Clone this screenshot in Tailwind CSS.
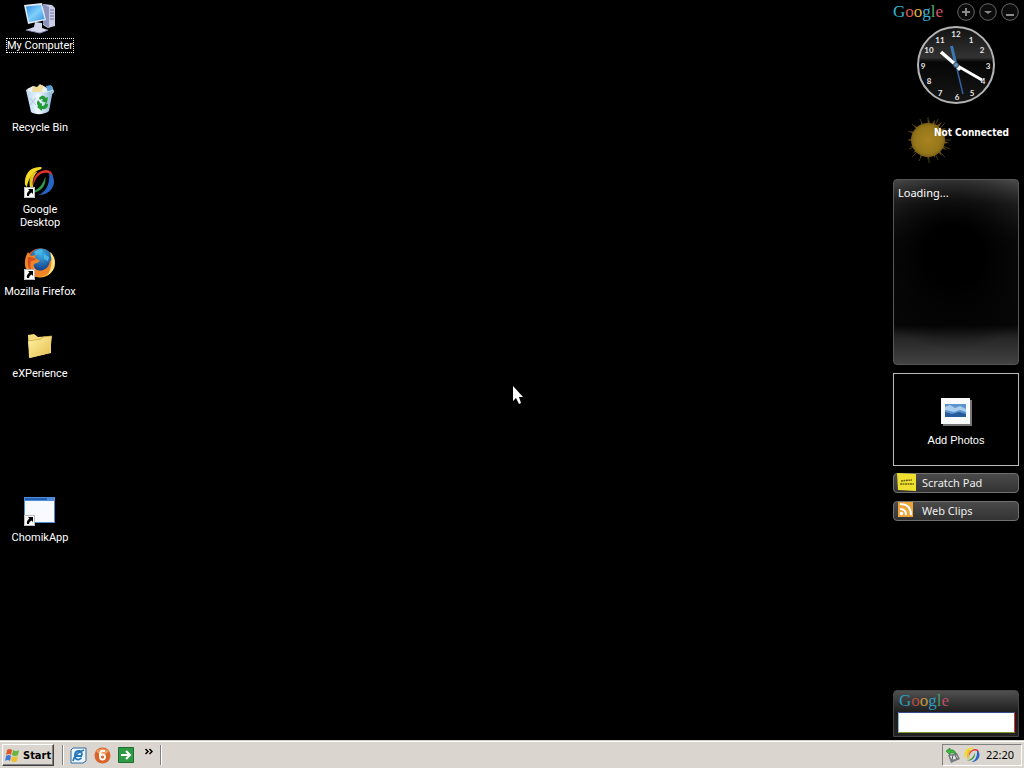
<!DOCTYPE html>
<html lang="en">
<head>
<meta charset="utf-8">
<title>Desktop</title>
<script src="https://cdn.jsdelivr.net/npm/@tailwindcss/browser@4"></script>
</head>
<body class="relative flex h-screen flex-col overflow-hidden bg-black font-['Noto_Sans',sans-serif] text-[11px] leading-[13px] text-white">
<svg class="absolute size-0" aria-hidden="true">
  <defs>
    <linearGradient id="screen" x1="0" y1="0" x2="1" y2="1"><stop offset="0" stop-color="#2f8be8"/><stop offset=".5" stop-color="#7fd0fb"/><stop offset="1" stop-color="#3a8fe0"/></linearGradient>
    <linearGradient id="folder" x1="0" y1="0" x2="1" y2="1"><stop offset="0" stop-color="#fff3a6"/><stop offset="1" stop-color="#e5bd4d"/></linearGradient>
    <linearGradient id="glass" x1="0" y1="0" x2="0" y2="1"><stop offset="0" stop-color="#111"/><stop offset=".4" stop-color="#333"/><stop offset=".46" stop-color="#060606"/><stop offset="1" stop-color="#161616"/></linearGradient>
    <linearGradient id="bin" x1="0" y1="0" x2="1" y2="0"><stop offset="0" stop-color="#b5d5ee"/><stop offset=".45" stop-color="#f3faff"/><stop offset="1" stop-color="#86b3d6"/></linearGradient>
    <radialGradient id="globe" cx=".5" cy=".25" r=".7"><stop offset="0" stop-color="#3fb1e8"/><stop offset="1" stop-color="#143f86"/></radialGradient>
    <linearGradient id="fox" x1="0" y1="0" x2="1" y2="1"><stop offset="0" stop-color="#c93c12"/><stop offset=".6" stop-color="#f08a1e"/><stop offset="1" stop-color="#ffcf33"/></linearGradient>
    <radialGradient id="sun"><stop offset="0" stop-color="#a88420"/><stop offset=".8" stop-color="#94761a"/><stop offset="1" stop-color="#7a6016"/></radialGradient>
    <symbol id="swirl" viewBox="0 0 32 32">
      <path d="M18 1C6 0 0 9 1 19l2 3C4 14 8 6 18 3Z" fill="#f5d922"/>
      <path d="M10 20C11 12 17 6 23 7q4 0 7 5 0-8-8-8C14 5 8 12 10 20Z" fill="#e5322b"/>
      <path d="M26 7q5 2 5 10c-1 8-8 13-16 13 7-3 12-10 11-23Z" fill="#2565c7"/>
      <path d="M22 11c1 8-3 14-10 16H5c8-1 14-6 17-16Z" fill="#2f9e49"/>
      <path d="M9 7C5 12 5 18 7 25l3-2C8 17 9 11 14 6Z" fill="#e0c41e"/>
    </symbol>
    <symbol id="shortcut" viewBox="0 0 11 11">
      <path d="M0 0h11v11H0z" fill="#fff"/><path d="M.5 .5h10v10H.5z" fill="none" stroke="#bbb"/>
      <path d="M4 2h5v5L7.500 5.500Q5 6.500 5 9H3Q2 6 5.500 3.500Z" fill="#000"/>
    </symbol>
  </defs>
</svg>

<main class="flex min-h-0 flex-1 justify-between">
  <nav aria-label="Desktop icons" class="grid w-20 auto-rows-[82px] content-start text-center font-['Roboto',sans-serif]">
    <a href="#computer" class="flex flex-col items-center gap-1 pt-0.5">
      <svg class="size-8" viewBox="0 0 32 32">
        <path d="M19 2l9 1 3 3v18l-7 2-5-3z" fill="#c9cee6"/><path d="M19 2l6 3v21l-6-4z" fill="#8b92bb"/><path d="M26 8h4M26 11h4M26 14h4M26 17h4" stroke="#6e75a5"/>
        <path d="M11 20l7 1v5l6 2-8 3-14-3 8-3z" fill="#d6d9ee"/><path d="M2 28l14 3 8-3" fill="none" stroke="#9298bd"/>
        <path d="M0 3l18-2 4 17-18 4z" fill="#dfe9fa"/><path d="M2 4.500l15-1.500 3.500 14-15.500 3z" fill="url(#screen)"/>
      </svg>
      <span class="border border-dotted border-white">My Computer</span>
    </a>
    <a href="#bin" class="flex flex-col items-center gap-[5px] pt-0.5">
      <svg class="size-8" viewBox="0 0 32 32">
        <path d="M3 5l6-3 5 2 4-3 5 3 5-2 2 6-3 3H5z" fill="#eaf2f8"/><path d="M9 2l4 1 3-3 4 3-3 5H8z" fill="#f2dc9c"/><path d="M22 2l5-1 3 6-6 2z" fill="#5aa0d8"/>
        <path d="M2 6c7 4 18 4 27 0l-4 21c-5 4-14 4-18 1z" fill="url(#bin)"/><path d="M2 6c7 4 18 4 27 0" fill="none" stroke="#d6ebf8"/>
        <path d="M6 14l6 7M6 21l6-7" stroke="#b1c4d8"/>
        <path d="M15 14q4-5 7 0l2-1-1 6-6-2 2-1q-1-2-3 0zM24 20q0 6-6 5v2l-5-4 5-4v3q3 0 3-3zM14 16l4 5-4 1q-2-3 0-6z" fill="#209b35"/>
      </svg>
      <span>Recycle Bin</span>
    </a>
    <a href="#google-desktop" class="flex flex-col items-center gap-[5px] pt-0.5">
      <svg class="size-8" viewBox="0 0 32 32"><use href="#swirl" width="31" height="31"/><use href="#shortcut" y="21" width="11" height="11"/></svg>
      <span>Google<br>Desktop</span>
    </a>
    <a href="#firefox" class="flex flex-col items-center gap-[5px] pt-0.5">
      <svg class="size-8" viewBox="0 0 32 32">
        <circle cx="16" cy="15" r="14.500" fill="url(#fox)"/>
        <circle cx="17" cy="12" r="11.500" fill="url(#globe)"/><path d="M10 4q5-4 9-2l-2 4-5 1zM20 6l5 3-1 4-4-2z" fill="#4ab8e6"/>
        <path d="M2 8L4 4l3 4 5-1-1 3 5 3-3 2q-4 0-3 4 3 5 9 3 6-2 7-9l3-2q1 12-8 16-10 5-17-3Q-1 18 2 8Z" fill="#ef8528"/>
        <path d="M4 9q7 0 8 3l-5 1q-2 7 2 10-7-2-5-14" fill="#d54e22"/>
        <path d="M26 4q5 4 5 11 0 8-8 13 7-11 3-24Z" fill="#ffe27a"/>
        <use href="#shortcut" y="21" width="11" height="11"/>
      </svg>
      <span class="whitespace-nowrap">Mozilla Firefox</span>
    </a>
    <a href="#experience" class="flex flex-col items-center gap-[5px] pt-0.5">
      <svg class="size-8" viewBox="0 0 32 32">
        <path d="M4 5l6-1 4 3 13-1v17L5 28z" fill="#f4dc7c"/><path d="M4 11l13-2 2-2 9-1-2 17-20 5z" fill="url(#folder)"/><path d="M4 11l13-2 2-2 9-1" fill="none" stroke="#c79e38" stroke-width=".7"/>
      </svg>
      <span>eXPerience</span>
    </a>
    <a href="#chomik" class="row-start-7 flex flex-col items-center gap-[5px] pt-0.5">
      <svg class="size-8" viewBox="0 0 32 32">
        <path d="M0 3h31v26H0z" fill="#4f8dd8"/><path d="M1 7h29v21H1z" fill="#f7faff"/><path d="M1 5h22" stroke="#2460b4" stroke-width="2"/><path d="M24 5h6" stroke="#4f8dd8" stroke-width="2"/>
        <use href="#shortcut" y="21" width="11" height="11"/>
      </svg>
      <span>ChomikApp</span>
    </a>
  </nav>

  <aside aria-label="Google sidebar" class="mr-[5px] flex w-[126px] flex-col pb-[3px]">
    <header class="flex h-6 items-center justify-between">
      <div class="font-['Liberation_Serif',serif] text-[17px] leading-6"><span class="text-[#34b5d5]">G</span><span class="text-[#df5a4f]">o</span><span class="text-[#dfb33c]">o</span><span class="text-[#3db0d5]">g</span><span class="text-[#54ad70]">l</span><span class="text-[#d95470]">e</span></div>
      <div class="flex gap-1 text-[#8a8a8a]">
        <button aria-label="Add gadget"><svg class="size-[18px]" viewBox="0 0 18 18" fill="none" stroke="currentColor"><circle cx="9" cy="9" r="8.300" fill="#0c0c0c" stroke="#666"/><path d="M9 5v8M5 9h8" stroke-width="2"/></svg></button>
        <button aria-label="Menu"><svg class="size-[18px]" viewBox="0 0 18 18"><circle cx="9" cy="9" r="8.300" fill="#0c0c0c" stroke="#666"/><path d="M5 8h8l-4 3z" fill="currentColor"/></svg></button>
        <button aria-label="Minimize"><svg class="size-[18px]" viewBox="0 0 18 18" stroke="currentColor"><circle cx="9" cy="9" r="8.300" fill="#0c0c0c" stroke="#666"/><path d="M5 12h8" stroke-width="2"/></svg></button>
      </div>
    </header>

    <svg class="mt-px size-20 self-center font-['Lato',sans-serif] text-[8px] font-bold" viewBox="0 0 80 80" role="img" aria-label="Clock">
      <circle cx="40" cy="40" r="38" fill="url(#glass)" stroke="#b4b4b4" stroke-width="2"/>
      <g fill="#e8e8e8" text-anchor="middle">
        <text x="40" y="12">12</text><text x="55" y="18">1</text><text x="66" y="28">2</text><text x="72" y="44">3</text><text x="67" y="59">4</text><text x="56" y="71">5</text><text x="41" y="75">6</text><text x="24" y="71">7</text><text x="13" y="59">8</text><text x="7" y="44">9</text><text x="13" y="28">10</text><text x="24" y="18">11</text>
      </g>
      <path d="M35.500 21l4.500 19" stroke="#3a78b5" stroke-width="3"/><path d="M40 40l7 29" stroke="#2f62a5" stroke-width="1.500"/>
      <path d="M25 27l15 13" stroke="#fff" stroke-width="3.500"/><path d="M40 40l26 15" stroke="#fff" stroke-width="3"/><path d="M38 38l6 7" stroke="#fff" stroke-width="3"/>
      <circle cx="40" cy="40" r="2.500" fill="#6c95bb" stroke="#345"/>
    </svg>

    <section aria-label="Weather" class="mt-[11px] grid h-12 pl-3">
      <svg class="col-start-1 row-start-1 size-12" viewBox="0 0 48 48">
        <path d="M24 3l1 7 5-6-1 7 8-5-5 8 9-2-7 6 9 1-8 4 9 4-9 1 7 6-9-3 4 9-7-7v9l-4-7-3 9-2-9-6 7 2-9-9 4 6-7-9 1 8-5-10-2 9-3-7-6 9 2-5-8 8 5-1-8 5 6z" fill="#665011"/>
        <path d="M23 1l1 46M3 24h43M7 8l33 33M40 7L7 41M15 3l18 41M33 3L14 45M3 15l42 18M45 15L4 33" stroke="#665011" stroke-width=".7"/>
        <circle cx="23" cy="24" r="17" fill="url(#sun)"/>
      </svg>
      <span class="col-start-1 row-start-1 mt-2.5 justify-self-end pr-2.5 font-['DejaVu_Sans_Condensed','DejaVu_Sans',sans-serif] text-[10px] font-bold whitespace-nowrap">Not Connected</span>
    </section>

    <section class="mt-[15px] h-[186px] rounded border border-[#555] bg-[radial-gradient(circle_at_60px_75px,#000_30px,transparent_95px),linear-gradient(180deg,#484848_0px,#242424_24px,#101010_60px,#060606_145px,#262626_158px,#424242_184px)] px-1 py-1.5">Loading...</section>

    <section class="mt-2 flex h-[93px] flex-col items-center justify-center gap-1.5 border border-[#bbb] bg-black pt-1.5">
      <svg class="h-7 w-[31px]" viewBox="0 0 31 28">
        <path d="M2 2h29v26H2z" fill="#777"/><path d="M0 0h29v26H0z" fill="#f8fafc"/><path d="M4 6h21v13H4z" fill="#5b94d0"/><path d="M4 9l5-2 5 3 5-2 6 3v3l-6-2-6 2-9-2z" fill="#a9cdeb"/><path d="M4 14l7 2 7-2 7 2v3H4z" fill="#285b9c"/>
      </svg>
      <button class="font-['Liberation_Sans',sans-serif] text-[11px] leading-4">Add Photos</button>
    </section>

    <button class="mt-[7px] flex h-5 items-center gap-[5px] rounded border border-[#707070] bg-linear-to-b from-[#4a4a4a] to-[#333] pb-0.5 pl-[3px] text-[#eee]">
      <svg class="size-5" viewBox="0 0 20 20"><path d="M0 1l19 1v17L1 18z" fill="#f0df2e"/><path d="M4 9l11-1M3 12h14" stroke="#6f6715" stroke-width="1.500" stroke-dasharray="2 .5"/></svg>
      <span>Scratch Pad</span>
    </button>
    <button class="mt-2 flex h-5 items-center gap-[5px] rounded border border-[#707070] bg-linear-to-b from-[#4a4a4a] to-[#333] pb-0.5 pl-[3px] text-[#eee]">
      <svg class="size-5" viewBox="0 0 20 20"><path d="M1 2h15v15H1z" fill="#eea53c"/><path d="M3 9q6 0 6 6M3 4q11 0 11 11" fill="none" stroke="#fff" stroke-width="2"/><circle cx="4.500" cy="13.500" r="1.800" fill="#fff"/></svg>
      <span>Web Clips</span>
    </button>

    <section class="mt-auto flex h-[47px] flex-col rounded-t border border-[#444] bg-linear-to-b from-[#505050] via-[#1c1c1c] to-[#222] pr-[3px] pb-[3px] pl-1">
      <div class="pl-px font-['Liberation_Serif',serif] text-[17px] leading-5"><span class="text-[#2d9cc0]">G</span><span class="text-[#b34b45]">o</span><span class="text-[#bf9a38]">o</span><span class="text-[#2d9cc0]">g</span><span class="text-[#4a9a62]">l</span><span class="text-[#b94f63]">e</span></div>
      <input aria-label="Google search" type="text" class="mt-px h-[21px] w-full border border-t-[#334a8a] border-r-[#d33] border-b-[#7c9a2d] border-l-[#8ab8e0] bg-white text-black">
    </section>
  </aside>
</main>

<footer class="flex h-7 shrink-0 items-center border-t border-[#d4d0c8] bg-[#dad6cf] pt-px pr-0.5 pl-0.5 text-black shadow-[inset_0_1px_#fff]">
  <button class="flex h-[22px] items-center gap-0.5 border border-t-white border-r-[#404040] border-b-[#404040] border-l-white px-0.5 font-['DejaVu_Sans_Condensed','DejaVu_Sans',sans-serif] text-[11px] font-bold shadow-[inset_-1px_-1px_#808080]">
    <svg class="size-4" viewBox="0 0 16 16"><path d="M2 3q3-2 5 0L6 8Q4 6 1 8z" fill="#e0562b"/><path d="M8 3q3 2 6 0l-1 5q-3 2-6 0z" fill="#68b440"/><path d="M1 9q3-2 5 0l-1 5q-2-2-5 0z" fill="#3f79d8"/><path d="M7 9q3 2 6 0l-1 5q-3 2-6 0z" fill="#f0c02f"/></svg>
    Start
  </button>
  <div class="ml-2 h-5 w-0.5 border-l border-[#808080] bg-white"></div>
  <div class="ml-1.5 flex items-center gap-[7px]">
    <button aria-label="Internet Explorer"><svg class="size-[17px]" viewBox="0 0 17 17"><path d="M3 1h13v13l-3 2H1V3z" fill="#eef7fd" stroke="#326b9e"/><path d="M12 9H5q0 4 4 3.500L11.500 11M5 8q0-4 4-4 3 0 3 4.500M3 14Q5 6 14 3" fill="none" stroke="#2678bd" stroke-width="1.800"/></svg></button>
    <button aria-label="Media player"><svg class="size-[17px]" viewBox="0 0 17 17"><circle cx="8.500" cy="8.500" r="8" fill="#d9642a"/><path d="M2 4q6-5 13 0l-3 3H5z" fill="#f09a60"/><path d="M11 4H7.500Q6 5 6 9" fill="none" stroke="#fff" stroke-width="1.800"/><circle cx="8.500" cy="10" r="2.500" fill="none" stroke="#fff" stroke-width="1.800"/></svg></button>
    <button aria-label="Go"><svg class="size-4" viewBox="0 0 16 16"><path d="M.5 .5h15v15H.5z" fill="#2f9944" stroke="#1b7031"/><path d="M3 8h9M8 4l4 4-4 4" fill="none" stroke="#fff" stroke-width="2"/></svg></button>
  </div>
  <button aria-label="More" class="mb-2 ml-[11px]"><svg class="h-[7px] w-2" viewBox="0 0 8 7"><path d="M.5 1L3 3.500.5 6M4.500 1L7 3.500 4.500 6" fill="none" stroke="#000" stroke-width="1.500"/></svg></button>
  <div class="ml-[7px] h-5 w-0.5 border-l border-[#808080] bg-white"></div>

  <div class="ml-auto flex h-[22px] w-20 items-center gap-[3px] border border-t-[#808080] border-r-white border-b-white border-l-[#808080] pl-0.5">
    <svg class="size-4" viewBox="0 0 16 16"><path d="M3 8l9-2 3 6-9 4z" fill="#777d82"/><path d="M5 9l6-1 2 3-6 2z" fill="#e2e5e5"/><path d="M8 8l-1 5M10 8l2 4" stroke="#555"/><path d="M1 4l4-3v2q5-1 6 4Q8 5 5 6v2z" fill="#39b83b" stroke="#1e7b26" stroke-width=".6"/></svg>
    <svg class="size-4"><use href="#swirl" width="16" height="16"/></svg>
    <time class="ml-auto pr-[7px] pb-px">22:20</time>
  </div>
</footer>

<svg class="pointer-events-none absolute top-[386px] left-[512px] h-5 w-3" viewBox="0 0 12 20" aria-hidden="true"><path d="M1 0v15l3-3 3 6 2-1-2-6h4z" fill="#fff"/></svg>
</body>
</html>
